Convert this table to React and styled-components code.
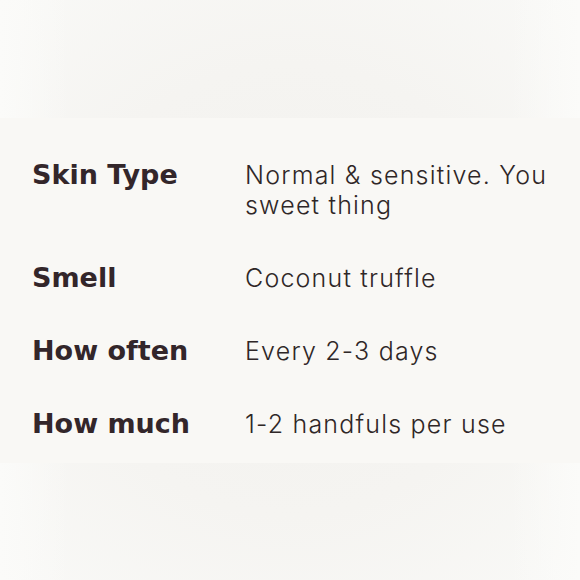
import React from 'react';
import styled, { createGlobalStyle } from 'styled-components';

const GlobalStyle = createGlobalStyle`
  html, body {
    margin: 0;
    padding: 0;
  }
  body {
    background: #f6f5f2;
    font-family: Inter, "Liberation Sans", sans-serif;
  }
`;

const Page = styled.div`
  width: 580px;
  height: 580px;
  display: flex;
  flex-direction: column;
  overflow: hidden;
  background:
    linear-gradient(90deg, #fbfbf9 0%, rgba(251, 251, 249, 0) 12%, rgba(251, 251, 249, 0) 88%, #fbfbf9 100%),
    radial-gradient(ellipse at 50% 50%, #f2f1ee 0%, #f5f4f1 55%, #f9f9f7 100%);
`;

const Fade = styled.div`
  height: ${props => props.h}px;
  flex-shrink: 0;
`;

const Band = styled.section`
  background: #f9f8f5;
  padding: 42px 0 24px 32px;
`;

const Specs = styled.dl`
  margin: 0;
  display: grid;
  grid-template-columns: 213px 320px;
  row-gap: 43px;
  align-items: baseline;
`;

const Label = styled.dt`
  font-family: "DejaVu Sans", sans-serif;
  font-weight: 700;
  font-size: 27px;
  line-height: 30px;
  color: #33262a;
`;

const Value = styled.dd`
  margin: 0;
  font-family: Inter, "DejaVu Sans", sans-serif;
  font-weight: 300;
  font-size: 25px;
  line-height: 30px;
  letter-spacing: 1.2px;
  color: #2f2727;
`;

const specs = [
  { label: 'Skin Type', value: 'Normal & sensitive. You sweet thing' },
  { label: 'Smell', value: 'Coconut truffle' },
  { label: 'How often', value: 'Every 2-3 days' },
  { label: 'How much', value: '1-2 handfuls per use' },
];

const App = () => (
  <>
    <GlobalStyle />
    <Page>
      <Fade h={118} />
      <Band>
        <Specs>
          {specs.map(item => (
            <React.Fragment key={item.label}>
              <Label>{item.label}</Label>
              <Value>{item.value}</Value>
            </React.Fragment>
          ))}
        </Specs>
      </Band>
    </Page>
  </>
);

export default App;
